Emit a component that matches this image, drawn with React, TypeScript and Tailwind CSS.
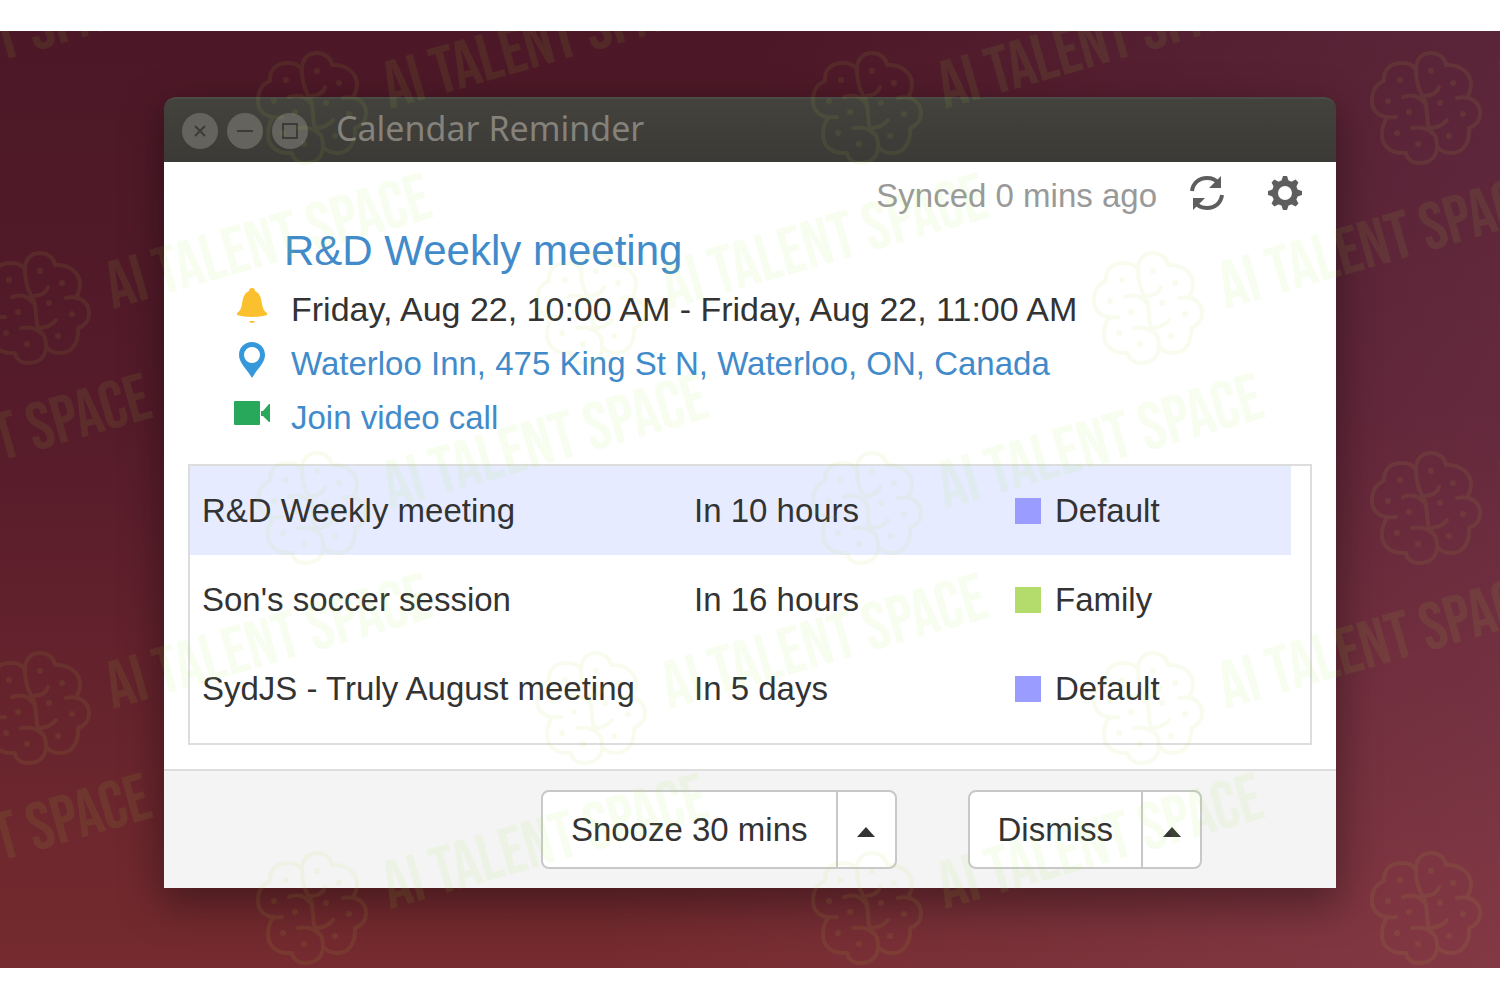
import clsx from 'clsx';

const events = [
  { id: 1, title: 'R&D Weekly meeting', when: 'In 10 hours', calendar: 'Default', color: 'bg-[#9a9cff]' },
  { id: 2, title: "Son's soccer session", when: 'In 16 hours', calendar: 'Family', color: 'bg-[#b3dc6c]' },
  { id: 3, title: 'SydJS - Truly August meeting', when: 'In 5 days', calendar: 'Default', color: 'bg-[#9a9cff]' },
];

const stamps = [
  [-246, 76], [311, 76], [866, 76], [1425, 76],
  [34, 276], [590, 276], [1147, 276],
  [-246, 476], [311, 476], [866, 476], [1425, 476],
  [34, 676], [590, 676], [1147, 676],
  [-246, 876], [311, 876], [866, 876], [1425, 876],
];

const brainDots = [
  [29, 28], [60, 19], [82, 31], [17, 49], [38, 60], [69, 51], [92, 62], [26, 81], [78, 84], [47, 92],
];

function Stamp({ x, y }: { x: number; y: number }) {
  return (
    <g transform={`translate(${x} ${y})`}>
      <g transform="translate(-54 -55)">
        <path
          fill="none"
          stroke="#b4e03c"
          strokeWidth="4"
          strokeLinecap="round"
          strokeLinejoin="round"
          d="M45 18C45 7 51 1 60 1C68 1 74 6 75 13C88 12 99 20 100 31C100 37 99 41 96 45M86 46C99 43 109 50 109 61C109 69 104 74 98 76C99 91 92 101 80 101C73 101 69 99 66 94C66 106 58 111 48 111C41 111 36 107 35 101C21 102 11 95 11 83C11 75 13 70 16 66M25 65C10 67 1 60 1 49C1 39 5 32 13 29C12 18 19 11 31 11C38 11 43 14 45 18C45 28 47 36 51 43C56 49 55 55 56 62C57 70 56 77 61 80C66 84 66 90 66 94M32 45Q46 40 54 52M68 35Q66 43 54 44M76 68Q70 76 58 76M41 76Q55 74 62 82"
        />
        {brainDots.map(([cx, cy]) => (
          <circle key={`${cx}-${cy}`} cx={cx} cy={cy} r="3" fill="#b4e03c" />
        ))}
      </g>
      <text
        transform="translate(79 2) rotate(-16)"
        fill="#a4ee3c"
        className="font-['Bebas_Neue','Liberation_Sans_Narrow','Liberation_Sans',sans-serif] text-[67px]"
      >
        AI TALENT SPACE
      </text>
    </g>
  );
}

function Watermark() {
  return (
    <svg className="pointer-events-none absolute inset-0 h-full w-full opacity-[0.08]" aria-hidden>
      {stamps.map(([x, y]) => (
        <Stamp key={`${x}-${y}`} x={x} y={y} />
      ))}
    </svg>
  );
}

function RefreshIcon() {
  return (
    <svg className="size-[34px]" viewBox="0 0 34 34" aria-hidden>
      <path d="M2 15C3 7 9 2 17 2C22 2 26 4 28 7M32 19C31 27 25 32 17 32C12 32 8 30 6 27" fill="none" stroke="#5e5e5e" strokeWidth="4" />
      <path d="M31 0V12H19ZM3 34V22H15Z" fill="#5e5e5e" />
    </svg>
  );
}

function GearIcon() {
  return (
    <svg className="size-[34px]" viewBox="-17 -17 34 34" aria-hidden>
      <circle r="10" fill="none" stroke="#5e5e5e" strokeWidth="6" />
      {[0, 45, 90, 135].map((angle) => (
        <g key={angle} transform={`rotate(${angle})`} fill="#5e5e5e">
          <path d="M-4 -11L-2 -17H2L4 -11ZM-4 11L-2 17H2L4 11Z" />
        </g>
      ))}
    </svg>
  );
}

function BellIcon() {
  return (
    <svg className="h-9 w-8" viewBox="0 0 32 36" fill="#fbc02d" aria-hidden>
      <path d="M16 0C18 0 19 1 19 3C24 5 25 10 26 16C27 21 28 23 31 25V27C27 28 22 29 16 29C10 29 5 28 1 27V25C4 23 5 21 6 16C7 10 8 5 13 3C13 1 14 0 16 0Z" />
      <path d="M13 33H19Q18 35 16 35Q14 35 13 33Z" />
    </svg>
  );
}

function PinIcon() {
  return (
    <svg className="h-9 w-7" viewBox="0 0 28 36" fill="#3498db" aria-hidden>
      <path
        fillRule="evenodd"
        d="M14 0C21.500 0 27 5.500 27 13C27 21 19 27 14 36C9 27 1 21 1 13C1 5.500 6.500 0 14 0ZM14 5A8 8 0 1 0 14 21A8 8 0 1 0 14 5Z"
      />
    </svg>
  );
}

function CameraIcon() {
  return (
    <svg className="h-6 w-9" viewBox="0 0 36 24" fill="#27a85a" aria-hidden>
      <rect width="26" height="24" rx="1" />
      <path d="M27 10H29L35 3H36V21H35L29 15H27Z" />
    </svg>
  );
}

function SplitButton({ label, menuLabel }: { label: string; menuLabel: string }) {
  return (
    <div className="flex h-[79px] overflow-hidden rounded-lg border-2 border-[#c8c8c8] bg-white">
      <button type="button" className="px-7">
        {label}
      </button>
      <button
        type="button"
        aria-label={menuLabel}
        className="flex w-[59px] items-center justify-center border-l-2 border-[#c8c8c8] pt-1"
      >
        <svg className="h-[10px] w-[18px]" viewBox="0 0 18 10" aria-hidden>
          <path d="M9 0L18 10H0Z" fill="#333" />
        </svg>
      </button>
    </div>
  );
}

const windowButton = 'flex size-9 items-center justify-center rounded-full bg-[#64635d]';

function TitleBar() {
  return (
    <header className="flex h-[65px] items-center rounded-t-xl border-t-2 border-[#4b4b46] bg-linear-to-b from-[#43423d] to-[#3b3a36] pl-[18px]">
      <div className="flex gap-[9px]">
        <button type="button" aria-label="Close" className={windowButton}>
          <svg className="size-3" viewBox="0 0 12 12" aria-hidden>
            <path d="M1 1L11 11M11 1L1 11" stroke="#3c3b37" strokeWidth="2" />
          </svg>
        </button>
        <button type="button" aria-label="Minimize" className={windowButton}>
          <svg className="h-[2px] w-4" viewBox="0 0 16 2" aria-hidden>
            <path d="M0 1H16" stroke="#3c3b37" strokeWidth="2" />
          </svg>
        </button>
        <button type="button" aria-label="Maximize" className={windowButton}>
          <svg className="size-4" viewBox="0 0 16 16" aria-hidden>
            <rect x="1" y="1" width="14" height="14" fill="none" stroke="#3c3b37" strokeWidth="2" />
          </svg>
        </button>
      </div>
      <h1 className="pb-1.5 pl-7 font-['Noto_Sans',sans-serif] text-[34px] leading-none text-[#84827b]">
        Calendar Reminder
      </h1>
    </header>
  );
}

export default function App() {
  return (
    <div className="flex min-h-screen flex-col bg-white pb-8 pt-[31px] font-['Liberation_Sans',Arial,sans-serif] text-[33px] leading-none text-[#333]">
      <main className="relative flex-1 overflow-hidden bg-[linear-gradient(100deg,transparent_45%,rgba(255,180,255,0.1)),linear-gradient(180deg,#4c1827,#551b2a_40%,#752b2f)] px-[164px] pb-20 pt-[66px]">
        <div className="rounded-t-xl shadow-[0_14px_40px_4px_rgba(0,0,0,0.35)]">
          <TitleBar />

          <section className="bg-white px-6 pb-6">
            <div className="flex h-[66px] items-center justify-end pr-[10px]">
              <span className="pr-[33px] text-[#999]">Synced 0 mins ago</span>
              <button type="button" aria-label="Refresh" className="mr-11 pb-1">
                <RefreshIcon />
              </button>
              <button type="button" aria-label="Settings" className="pb-1">
                <GearIcon />
              </button>
            </div>

            <h2 className="h-[54px] pl-24 pt-0.5 text-[42px]">
              <a href="#event" className="text-[#428bca]">
                R&amp;D Weekly meeting
              </a>
            </h2>
            <ul className="pl-11">
              <li className="flex h-[54px] items-center">
                <span className="flex w-[59px] pb-1.5 pl-1">
                  <BellIcon />
                </span>
                <span className="text-[34px]">Friday, Aug 22, 10:00 AM - Friday, Aug 22, 11:00 AM</span>
              </li>
              <li className="flex h-[54px] items-center">
                <span className="flex w-[59px] pb-1.5 pl-1.5">
                  <PinIcon />
                </span>
                <a href="#location" className="text-[#428bca]">
                  Waterloo Inn, 475 King St N, Waterloo, ON, Canada
                </a>
              </li>
              <li className="flex h-[54px] items-center">
                <span className="flex w-[59px] pb-2 pl-0.5">
                  <CameraIcon />
                </span>
                <a href="#call" className="text-[#428bca]">
                  Join video call
                </a>
              </li>
            </ul>

            <div className="mt-5 border-2 border-[#ddd] pb-2.5 pr-[19px]">
              <table className="w-full table-fixed text-left">
                <tbody>
                  {events.map((event, index) => (
                    <tr key={event.id} className={clsx('h-[89px]', index === 0 && 'bg-[#e6ebff]')}>
                      <td className="w-[492px] whitespace-nowrap px-3">{event.title}</td>
                      <td className="w-[321px] px-3">{event.when}</td>
                      <td className="px-3">
                        <span className="flex items-center gap-3.5">
                          <span className={clsx('size-[26px]', event.color)} />
                          {event.calendar}
                        </span>
                      </td>
                    </tr>
                  ))}
                </tbody>
              </table>
            </div>
          </section>

          <footer className="flex h-[119px] items-center justify-end gap-[71px] border-t-2 border-[#ddd] bg-[#f4f4f4] pr-[134px]">
            <SplitButton label="Snooze 30 mins" menuLabel="Snooze options" />
            <SplitButton label="Dismiss" menuLabel="Dismiss options" />
          </footer>
        </div>
        <Watermark />
      </main>
    </div>
  );
}
